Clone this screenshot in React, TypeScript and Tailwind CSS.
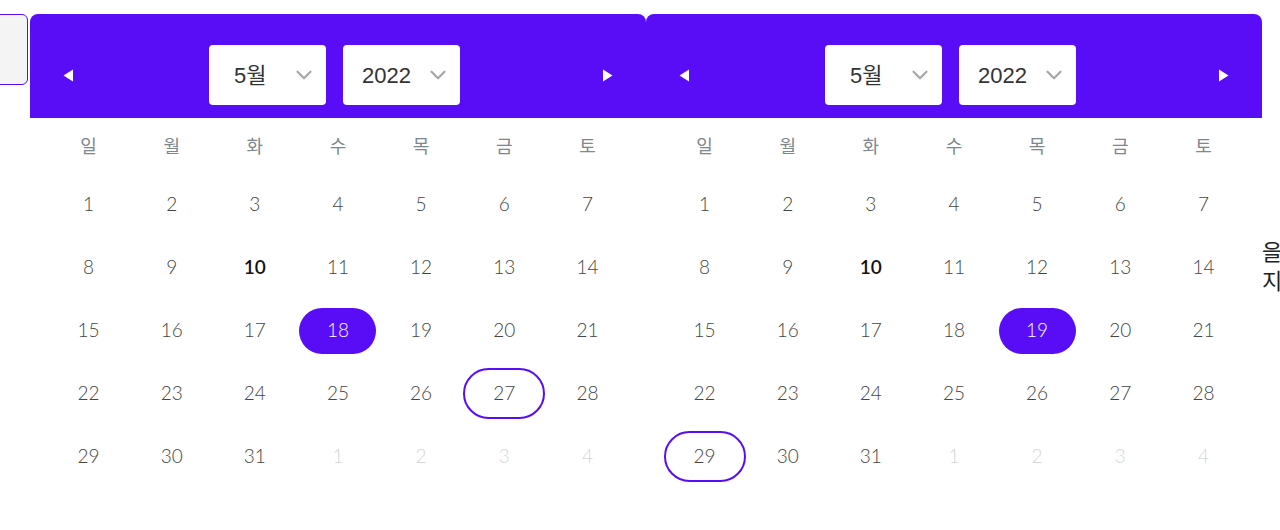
import { ChevronDown } from "lucide-react";

const weekdays = ["일", "월", "화", "수", "목", "금", "토"];

type Cell = { day: number; muted?: boolean };

const mayCells: Cell[] = [
  ...Array.from({ length: 31 }, (_, i) => ({ day: i + 1 })),
  { day: 1, muted: true },
  { day: 2, muted: true },
  { day: 3, muted: true },
  { day: 4, muted: true },
];

const Triangle = ({ dir }: { dir: "left" | "right" }) => (
  <svg width="11" height="13" viewBox="0 0 11 13" className="shrink-0">
    {dir === "left" ? <path d="M10 0.5 L0.5 6.5 L10 12.5 Z" fill="#fff" /> : <path d="M1 0.5 L10.5 6.5 L1 12.5 Z" fill="#fff" />}
  </svg>
);

const Select = ({ label, padLeft }: { label: string; padLeft: string }) => (
  <div className={`flex h-[60px] w-[117px] items-center justify-between rounded-[4px] bg-white pr-[9px] ${padLeft}`}>
    <span className="font-['Liberation_Sans','Noto_Sans_CJK_KR',sans-serif] text-[22px] text-[#333]">{label}</span>
    <ChevronDown size={26} strokeWidth={2} className="text-[#a6a6a6]" />
  </div>
);

const Calendar = ({ selected, today, outlined }: { selected: number; today: number; outlined: number }) => (
  <div className="w-[616px] shrink-0">
    <div className="flex h-[104px] items-center justify-between rounded-t-[8px] bg-[#590df6] px-[33px] pt-[18px]">
      <Triangle dir="left" />
      <div className="mr-[7px] flex gap-[17px]">
        <Select label="5월" padLeft="pl-[25px]" />
        <Select label="2022" padLeft="pl-[19px]" />
      </div>
      <Triangle dir="right" />
    </div>
    <div className="px-[17px]">
      <div className="grid h-[54px] grid-cols-7 items-center">
        {weekdays.map((w) => (
          <div key={w} className="text-center font-['Noto_Sans_CJK_KR',sans-serif] text-[18px] text-[#7d878d]">
            {w}
          </div>
        ))}
      </div>
      <div className="mt-[1px] grid grid-cols-7">
        {mayCells.map((c, i) => {
          const isSel = !c.muted && c.day === selected;
          const isOut = !c.muted && c.day === outlined;
          const isToday = !c.muted && c.day === today;
          return (
            <div key={i} className="flex h-[63px] items-center justify-center">
              <div
                className={
                  "flex items-center justify-center rounded-full font-['Lato',sans-serif] text-[19px] " +
                  (isSel
                    ? "h-[46px] w-[77px] bg-[#590df6] font-light text-white"
                    : isOut
                    ? "h-[51px] w-[82px] border-2 border-[#590df6] font-light text-[#444]"
                    : isToday
                    ? "h-[46px] w-[77px] font-semibold text-[#111]"
                    : c.muted
                    ? "h-[46px] w-[77px] font-light text-[#d4d7dc]"
                    : "h-[46px] w-[77px] font-light text-[#444]")
                }
              >
                {c.day}
              </div>
            </div>
          );
        })}
      </div>
    </div>
  </div>
);

export default function App() {
  return (
    <div className="flex h-[530px] w-[1280px] overflow-hidden bg-white pt-[14px]">
      <div className="-ml-[40px] mr-[2px] h-[71px] w-[68px] shrink-0 rounded-[6px] border border-[#590df6] bg-[#f4f4f4]" />
      <Calendar selected={18} today={10} outlined={27} />
      <Calendar selected={19} today={10} outlined={29} />
      <div className="w-[48px] shrink-0 pt-[222px] font-['Noto_Sans_CJK_KR',sans-serif] text-[22px] leading-[29px] text-[#222]">
        <div>을</div>
        <div>지정</div>
      </div>
    </div>
  );
}
